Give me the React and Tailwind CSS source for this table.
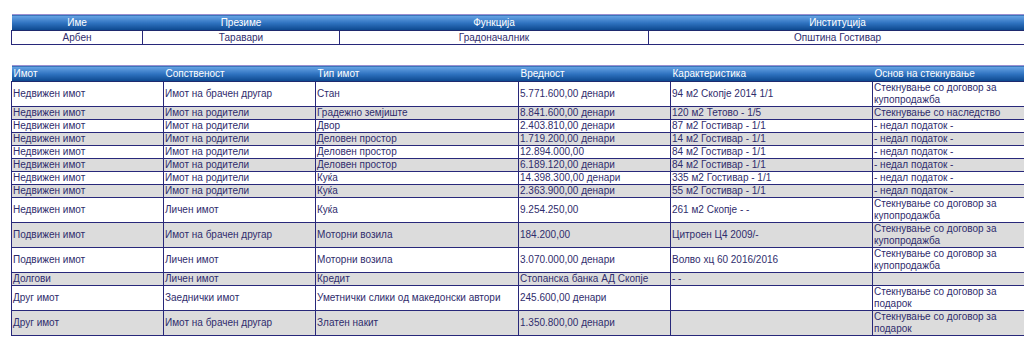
import React from 'react';

const person = { ime: 'Арбен', prezime: 'Таравари', funkcija: 'Градоначалник', institucija: 'Општина Гостивар' };

const rows = [
  ['Недвижен имот', 'Имот на брачен другар', 'Стан', '5.771.600,00 денари', '94 м2 Скопје 2014 1/1', 'Стекнување со договор за купопродажба'],
  ['Недвижен имот', 'Имот на родители', 'Градежно земјиште', '8.841.600,00 денари', '120 м2 Тетово - 1/5', 'Стекнување со наследство'],
  ['Недвижен имот', 'Имот на родители', 'Двор', '2.403.810,00 денари', '87 м2 Гостивар - 1/1', '- недал податок -'],
  ['Недвижен имот', 'Имот на родители', 'Деловен простор', '1.719.200,00 денари', '14 м2 Гостивар - 1/1', '- недал податок -'],
  ['Недвижен имот', 'Имот на родители', 'Деловен простор', '12.894.000,00', '84 м2 Гостивар - 1/1', '- недал податок -'],
  ['Недвижен имот', 'Имот на родители', 'Деловен простор', '6.189.120,00 денари', '84 м2 Гостивар - 1/1', '- недал податок -'],
  ['Недвижен имот', 'Имот на родители', 'Куќа', '14.398.300,00 денари', '335 м2 Гостивар - 1/1', '- недал податок -'],
  ['Недвижен имот', 'Имот на родители', 'Куќа', '2.363.900,00 денари', '55 м2 Гостивар - 1/1', '- недал податок -'],
  ['Недвижен имот', 'Личен имот', 'Куќа', '9.254.250,00', '261 м2 Скопје - -', 'Стекнување со договор за купопродажба'],
  ['Подвижен имот', 'Имот на брачен другар', 'Моторни возила', '184.200,00', 'Цитроен Ц4 2009/-', 'Стекнување со договор за купопродажба'],
  ['Подвижен имот', 'Личен имот', 'Моторни возила', '3.070.000,00 денари', 'Волво хц 60 2016/2016', 'Стекнување со договор за купопродажба'],
  ['Долгови', 'Личен имот', 'Кредит', 'Стопанска банка АД Скопје', '- -', ''],
  ['Друг имот', 'Заеднички имот', 'Уметнички слики од македонски автори', '245.600,00 денари', '', 'Стекнување со договор за подарок'],
  ['Друг имот', 'Имот на брачен другар', 'Златен накит', '1.350.800,00 денари', '', 'Стекнување со договор за подарок'],
];

const headCell = 'h-[13px] px-[2px] font-normal text-white bg-gradient-to-b from-[#6aa6e6] via-[#2f73c0] to-[#0a468c] border-t border-t-[#9a8fd0] border-b border-b-[#1f2a6e]';
const cell = 'px-[1px] align-middle border border-[#28287a] leading-[12px]';

export default function App() {
  return (
    <div className="w-[1024px] h-[338px] overflow-hidden bg-white text-[10px] text-[#2f2c6c]" style={{ fontFamily: '"Liberation Sans", Arial, sans-serif' }}>
      <div className="pl-[11px] pt-[14px]">
        <table className="table-fixed border-collapse w-[1016px]">
          <colgroup>
            <col className="w-[131px]" />
            <col className="w-[197px]" />
            <col className="w-[309px]" />
            <col />
          </colgroup>
          <thead>
            <tr>
              <th className={headCell + ' text-center'}>Име</th>
              <th className={headCell + ' text-center'}>Презиме</th>
              <th className={headCell + ' text-center'}>Функција</th>
              <th className={headCell + ' text-center'}>Институција</th>
            </tr>
          </thead>
          <tbody>
            <tr className="h-[14px]">
              <td className={cell + ' text-center'}>{person.ime}</td>
              <td className={cell + ' text-center'}>{person.prezime}</td>
              <td className={cell + ' text-center'}>{person.funkcija}</td>
              <td className={cell + ' text-center'}>{person.institucija}</td>
            </tr>
          </tbody>
        </table>

        <table className="table-fixed border-collapse w-[1016px] mt-[20px]">
          <colgroup>
            <col className="w-[152px]" />
            <col className="w-[152px]" />
            <col className="w-[203px]" />
            <col className="w-[152px]" />
            <col className="w-[202px]" />
            <col />
          </colgroup>
          <thead>
            <tr>
              {['Имот', 'Сопственост', 'Тип имот', 'Вредност', 'Карактеристика', 'Основ на стекнување'].map((h) => (
                <th key={h} className={headCell + ' text-left'}>{h}</th>
              ))}
            </tr>
          </thead>
          <tbody>
            {rows.map((r, i) => (
              <tr key={i} className={i % 2 === 1 ? 'bg-[#dcdcdc]' : 'bg-white'}>
                {r.map((c, j) => (
                  <td key={j} className={cell + ' h-[13px]'}>{c}</td>
                ))}
              </tr>
            ))}
          </tbody>
        </table>
      </div>
    </div>
  );
}
